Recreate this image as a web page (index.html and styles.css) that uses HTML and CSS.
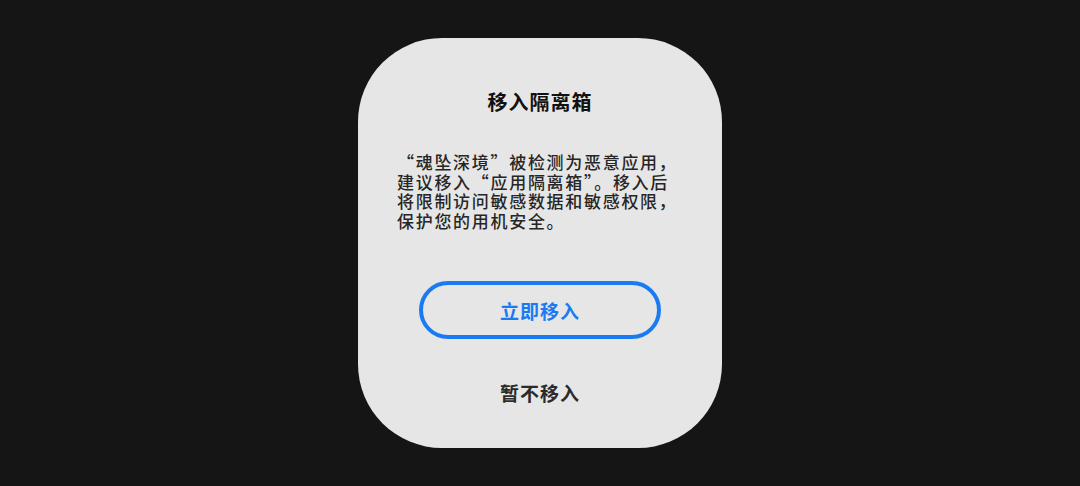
FILE: index.html
```html
<!DOCTYPE html>
<html lang="zh-CN">
<head>
    <meta charset="UTF-8">
    <meta name="viewport" content="width=device-width, initial-scale=1.0">
    <title>移入隔离箱</title>
    <link rel="stylesheet" href="styles.css">
</head>
<body>
    <div class="dialog">
        <h1 class="dialog-title">移入隔离箱</h1>
        <p class="dialog-text">
            “魂坠深境”被检测为恶意应用，<br>
            建议移入“应用隔离箱”。移入后<br>
            将限制访问敏感数据和敏感权限，<br>
            保护您的用机安全。
        </p>
        <button class="btn-primary">立即移入</button>
        <button class="btn-cancel">暂不移入</button>
    </div>
</body>
</html>
```

FILE: styles.css
```css
html, body {
    margin: 0;
    height: 100%;
}
body {
    background: #161516;
    font-family: "Noto Sans CJK SC", "Noto Sans", sans-serif;
    display: flex;
    align-items: center;
    justify-content: center;
}
.dialog {
    width: 364px;
    height: 410px;
    box-sizing: border-box;
    background: #e6e6e6;
    border-radius: 84px;
    padding: 52px 30px 0 39px;
    display: flex;
    flex-direction: column;
}
.dialog-title {
    margin: 0;
    font-size: 20px;
    line-height: 24px;
    font-weight: 700;
    color: #111;
    text-align: center;
    padding-right: 9px;
    letter-spacing: 1px;
}
.dialog-text {
    margin: 38px 0 0;
    font-size: 17px;
    line-height: 19.5px;
    letter-spacing: 1.7px;
    color: #262626;
    font-weight: 500;
    white-space: nowrap;
}
.btn-primary {
    margin: 51px 0 0 22px;
    width: 242px;
    height: 58px;
    box-sizing: border-box;
    border: 4px solid #1a7af2;
    border-radius: 29px;
    background: transparent;
    color: #1a7af2;
    font-family: inherit;
    font-size: 19px;
    font-weight: 700;
    letter-spacing: 1px;
}
.btn-cancel {
    margin: 42px 0 0 22px;
    width: 242px;
    height: 24px;
    padding: 0;
    border: none;
    background: transparent;
    color: #2b2b2b;
    font-family: inherit;
    font-size: 19px;
    line-height: 24px;
    font-weight: 700;
    letter-spacing: 1px;
}
```
